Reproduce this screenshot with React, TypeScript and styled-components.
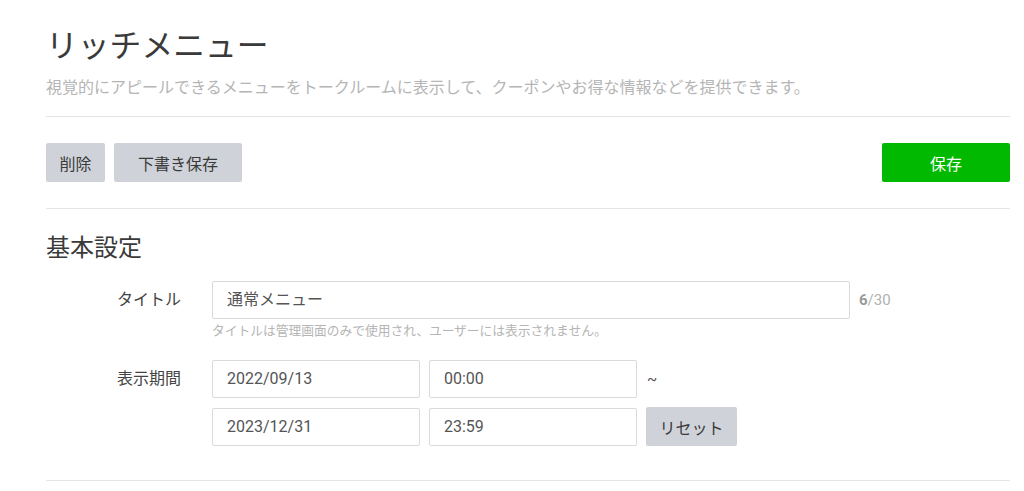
import { FC } from 'react';
import styled, { createGlobalStyle } from 'styled-components';

const GlobalStyle = createGlobalStyle`
  body {
    margin: 0;
    background: #ffffff;
    font-family: Roboto, "Noto Sans CJK JP", sans-serif;
    color: #333333;
  }
`;

const Page = styled.div`
  padding: 26px 14px 0 46px;
`;

const Title = styled.h1`
  margin: 0;
  font-size: 31.8px;
  line-height: 40px;
  font-weight: 400;
  color: #3a3a3a;
`;

const Lead = styled.p`
  margin: 10px 0 0;
  font-size: 16px;
  line-height: 24px;
  color: #b5b5b5;
`;

const Divider = styled.hr`
  margin: 0;
  border: 0;
  border-top: 1px solid #e4e4e4;
`;

const HeaderDivider = styled(Divider)`
  margin-top: 16px;
`;

const Toolbar = styled.div`
  display: flex;
  align-items: center;
  gap: 9px;
  padding: 26px 0;
`;

const Spacer = styled.div`
  flex: 1;
`;

const Button = styled.button<{ $variant?: 'primary' | 'default'; $width?: number }>`
  height: 39px;
  width: ${({ $width }) => ($width ? `${$width}px` : 'auto')};
  padding: 0 12px;
  border: 0;
  border-radius: 2px;
  font-family: Roboto, "Noto Sans CJK JP", sans-serif;
  font-size: 16px;
  cursor: pointer;
  background: ${({ $variant }) => ($variant === 'primary' ? '#00b900' : '#cfd3d9')};
  color: ${({ $variant }) => ($variant === 'primary' ? '#ffffff' : '#3a3a3a')};
`;

const SectionTitle = styled.h2`
  margin: 23px 0 0;
  font-size: 24px;
  line-height: 32px;
  font-weight: 400;
  color: #3a3a3a;
`;

const Form = styled.div`
  padding: 17px 0 34px;
  display: flex;
  flex-direction: column;
  gap: 20px;
`;

const FieldRow = styled.div`
  display: flex;
  align-items: flex-start;
`;

const Label = styled.div`
  width: 95px;
  margin-left: 71px;
  flex-shrink: 0;
  font-size: 16px;
  line-height: 38px;
  color: #444444;
`;

const FieldBody = styled.div`
  display: flex;
  flex-direction: column;
`;

const InputLine = styled.div`
  display: flex;
  align-items: center;
  gap: 9px;
`;

const TextBox = styled.div<{ $width: number }>`
  box-sizing: border-box;
  width: ${({ $width }) => $width}px;
  height: 38px;
  padding: 0 14px;
  border: 1px solid #dadada;
  border-radius: 2px;
  font-size: 16px;
  line-height: 36px;
  color: #555555;
`;

const Counter = styled.span`
  font-size: 15px;
  color: #b0b0b0;

  b {
    color: #9a9a9a;
    font-weight: 700;
  }
`;

const Hint = styled.div`
  margin-top: 3px;
  font-size: 12.75px;
  line-height: 18px;
  color: #b5b5b5;
`;

const PeriodGrid = styled.div`
  display: grid;
  grid-template-columns: 208px 208px auto;
  column-gap: 9px;
  row-gap: 9px;
  align-items: center;
`;

const Tilde = styled.span`
  margin-left: 1px;
  font-size: 15px;
  color: #555555;
`;

const App: FC = () => {
  return (
    <>
      <GlobalStyle />
      <Page>
        <Title>リッチメニュー</Title>
        <Lead>視覚的にアピールできるメニューをトークルームに表示して、クーポンやお得な情報などを提供できます。</Lead>
        <HeaderDivider />

        <Toolbar>
          <Button $width={59}>削除</Button>
          <Button $width={128}>下書き保存</Button>
          <Spacer />
          <Button $variant="primary" $width={128}>
            保存
          </Button>
        </Toolbar>
        <Divider />

        <SectionTitle>基本設定</SectionTitle>
        <Form>
          <FieldRow>
            <Label>タイトル</Label>
            <FieldBody>
              <InputLine>
                <TextBox $width={638}>通常メニュー</TextBox>
                <Counter>
                  <b>6</b>/30
                </Counter>
              </InputLine>
              <Hint>タイトルは管理画面のみで使用され、ユーザーには表示されません。</Hint>
            </FieldBody>
          </FieldRow>

          <FieldRow>
            <Label>表示期間</Label>
            <PeriodGrid>
              <TextBox $width={208}>2022/09/13</TextBox>
              <TextBox $width={208}>00:00</TextBox>
              <Tilde>~</Tilde>
              <TextBox $width={208}>2023/12/31</TextBox>
              <TextBox $width={208}>23:59</TextBox>
              <Button $width={91}>リセット</Button>
            </PeriodGrid>
          </FieldRow>
        </Form>
        <Divider />
      </Page>
    </>
  );
};

export default App;
